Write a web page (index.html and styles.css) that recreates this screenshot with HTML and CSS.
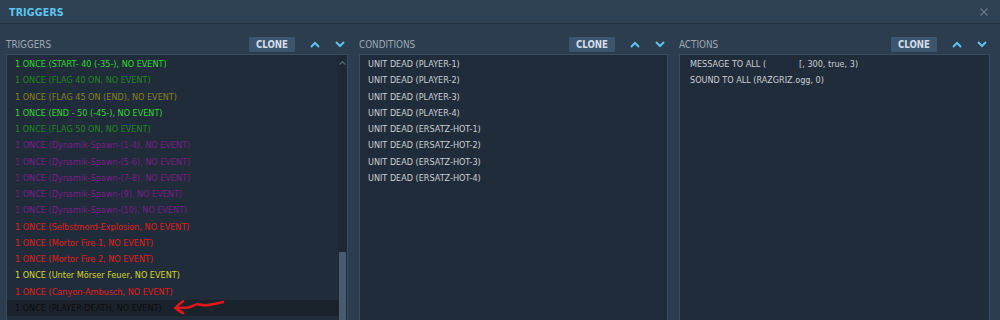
FILE: index.html
```html
<!DOCTYPE html>
<html lang="en">
<head>
<meta charset="utf-8">
<title>Triggers</title>
<link rel="stylesheet" href="styles.css">
</head>
<body>
<div class="window">
  <header class="titlebar">
    <span class="title">TRIGGERS</span>
    <span class="close"><svg width="8" height="8" viewBox="0 0 8 8"><path d="M0.5 0.5 L7.5 7.5 M7.5 0.5 L0.5 7.5" stroke="#6b7b8b" stroke-width="1.1" fill="none"/></svg></span>
  </header>
  <main class="panels">
    <section class="panel">
      <div class="panel-head">
        <span class="label">TRIGGERS</span>
        <span class="clone">CLONE</span>
        <span class="chev"><svg width="10" height="7" viewBox="0 0 10 7"><polyline points="1,6 5,2 9,6" fill="none" stroke="#5cc3e8" stroke-width="2"/></svg></span>
        <span class="chev"><svg width="10" height="7" viewBox="0 0 10 7"><polyline points="1,1 5,5 9,1" fill="none" stroke="#5cc3e8" stroke-width="2"/></svg></span>
      </div>
      <div class="list">
        <ul class="rows">
          <li class="row c-green">1 ONCE (START- 40 (-35-), NO EVENT)</li>
          <li class="row c-dgreen">1 ONCE (FLAG 40 ON, NO EVENT)</li>
          <li class="row c-olive">1 ONCE (FLAG 45 ON (END), NO EVENT)</li>
          <li class="row c-green">1 ONCE (END - 50 (-45-), NO EVENT)</li>
          <li class="row c-dgreen">1 ONCE (FLAG 50 ON, NO EVENT)</li>
          <li class="row c-purple">1 ONCE (Dynamik-Spawn-(1-4), NO EVENT)</li>
          <li class="row c-purple">1 ONCE (Dynamik-Spawn-(5-6), NO EVENT)</li>
          <li class="row c-purple">1 ONCE (Dynamik-Spawn-(7-8), NO EVENT)</li>
          <li class="row c-purple">1 ONCE (Dynamik-Spawn-(9), NO EVENT)</li>
          <li class="row c-purple">1 ONCE (Dynamik-Spawn-(10), NO EVENT)</li>
          <li class="row c-red">1 ONCE (Selbstmord-Explosion, NO EVENT)</li>
          <li class="row c-red">1 ONCE (Mortor Fire 1, NO EVENT)</li>
          <li class="row c-red">1 ONCE (Mortor Fire 2, NO EVENT)</li>
          <li class="row c-yellow">1 ONCE (Unter Mörser Feuer, NO EVENT)</li>
          <li class="row c-red">1 ONCE (Canyon-Ambusch, NO EVENT)</li>
          <li class="row selected">1 ONCE (PLAYER-DEATH, NO EVENT)</li>
        </ul>
        <div class="scrollbar">
          <svg class="caret" width="7" height="4" viewBox="0 0 7 4"><polyline points="0.5,3.5 3.5,0.7 6.5,3.5" fill="none" stroke="#56687a" stroke-width="1.2"/></svg>
          <div class="thumb"></div>
        </div>
        <svg class="annotation" width="56" height="20" viewBox="0 0 56 20">
          <path d="M1.5 10 Q 6 9.6 13 9.7 C 18 9.6 20 6.5 23 6.3 C 27 6.2 28 7.5 31 7.3 C 36 7 40 6 49 4" fill="none" stroke="#e3171a" stroke-width="2.6" stroke-linecap="round"/>
          <path d="M9 3.3 Q 4 7 1.5 10 Q 4 12.5 9 15" fill="none" stroke="#e3171a" stroke-width="2.6" stroke-linecap="round"/>
        </svg>
      </div>
    </section>
    <section class="panel">
      <div class="panel-head">
        <span class="label">CONDITIONS</span>
        <span class="clone">CLONE</span>
        <span class="chev"><svg width="10" height="7" viewBox="0 0 10 7"><polyline points="1,6 5,2 9,6" fill="none" stroke="#5cc3e8" stroke-width="2"/></svg></span>
        <span class="chev"><svg width="10" height="7" viewBox="0 0 10 7"><polyline points="1,1 5,5 9,1" fill="none" stroke="#5cc3e8" stroke-width="2"/></svg></span>
      </div>
      <div class="list">
        <ul class="rows">
          <li class="row c-plain">UNIT DEAD (PLAYER-1)</li>
          <li class="row c-plain">UNIT DEAD (PLAYER-2)</li>
          <li class="row c-plain">UNIT DEAD (PLAYER-3)</li>
          <li class="row c-plain">UNIT DEAD (PLAYER-4)</li>
          <li class="row c-plain">UNIT DEAD (ERSATZ-HOT-1)</li>
          <li class="row c-plain">UNIT DEAD (ERSATZ-HOT-2)</li>
          <li class="row c-plain">UNIT DEAD (ERSATZ-HOT-3)</li>
          <li class="row c-plain">UNIT DEAD (ERSATZ-HOT-4)</li>
        </ul>
      </div>
    </section>
    <section class="panel">
      <div class="panel-head">
        <span class="label">ACTIONS</span>
        <span class="clone">CLONE</span>
        <span class="chev"><svg width="10" height="7" viewBox="0 0 10 7"><polyline points="1,6 5,2 9,6" fill="none" stroke="#5cc3e8" stroke-width="2"/></svg></span>
        <span class="chev"><svg width="10" height="7" viewBox="0 0 10 7"><polyline points="1,1 5,5 9,1" fill="none" stroke="#5cc3e8" stroke-width="2"/></svg></span>
      </div>
      <div class="list">
        <ul class="rows rows-actions">
          <li class="row c-plain">MESSAGE TO ALL (<span class="blank"></span>[, 300, true, 3)</li>
          <li class="row c-plain">SOUND TO ALL (RAZGRIZ.ogg, 0)</li>
        </ul>
      </div>
    </section>
  </main>
</div>
</body>
</html>
```

FILE: styles.css
```css
* {
  box-sizing: border-box;
  margin: 0;
  padding: 0;
}

html, body {
  width: 1000px;
  height: 320px;
  overflow: hidden;
}

body {
  background: #2c3d50;
  font-family: "DejaVu Sans Condensed", "Liberation Sans Narrow", "DejaVu Sans", sans-serif;
  font-stretch: condensed;
}

.window {
  height: 320px;
  overflow: hidden;
}

.titlebar {
  height: 24px;
  background: #2f4154;
  border-bottom: 1px solid #223040;
  display: flex;
  align-items: center;
  justify-content: space-between;
  padding: 1px 12px 0 9px;
}

.title {
  color: #5ec6ee;
  font-weight: bold;
  font-size: 10.5px;
  letter-spacing: 0.2px;
}

.close {
  display: flex;
  width: 8px;
  height: 8px;
}

.panels {
  display: grid;
  grid-template-columns: 342px 309px 311px;
  column-gap: 11px;
  padding: 10px 0 0 6px;
}

.panel {
  display: flex;
  flex-direction: column;
}

.panel-head {
  height: 20px;
  display: flex;
  align-items: center;
}

.label {
  flex: 1;
  color: #9ea8b2;
  font-size: 9.8px;
}

.clone {
  width: 46px;
  height: 15px;
  display: flex;
  align-items: center;
  justify-content: center;
  background: #3e556f;
  color: #d3dde7;
  font-weight: bold;
  font-size: 9.6px;
  border-radius: 1px;
  margin-right: 12px;
}

.chev {
  width: 16px;
  height: 16px;
  display: flex;
  align-items: center;
  justify-content: center;
}

.chev + .chev {
  margin-left: 9px;
}

.list {
  position: relative;
  height: 280px;
  display: flex;
  background: #212c3a;
  border: 1px solid #384c62;
}

.rows {
  list-style: none;
  flex: 1;
  padding-top: 1px;
}

.row {
  height: 16.27px;
  line-height: 16.27px;
  padding-left: 8px;
  font-size: 9px;
  white-space: nowrap;
}

.rows-actions .row {
  padding-left: 10px;
}

.blank {
  display: inline-block;
  width: 33px;
}

.c-green { color: #2fd82f; }
.c-dgreen { color: #1f861f; }
.c-olive { color: #85821a; }
.c-purple { color: #781d88; }
.c-red { color: #e01c1c; }
.c-yellow { color: #d6d61e; }
.c-plain { color: #c9cfd5; }

.row.selected {
  background: #1a222c;
  color: #0c0c0c;
}

.scrollbar {
  width: 9px;
  background: #1d2833;
  display: flex;
  flex-direction: column;
  align-items: center;
}

.caret {
  margin-top: 6px;
}

.thumb {
  width: 7px;
  margin-top: 187px;
  flex: 1;
  background: #4a5b6f;
  border-radius: 1px;
}

.annotation {
  position: absolute;
  left: 167px;
  top: 243px;
}
```
